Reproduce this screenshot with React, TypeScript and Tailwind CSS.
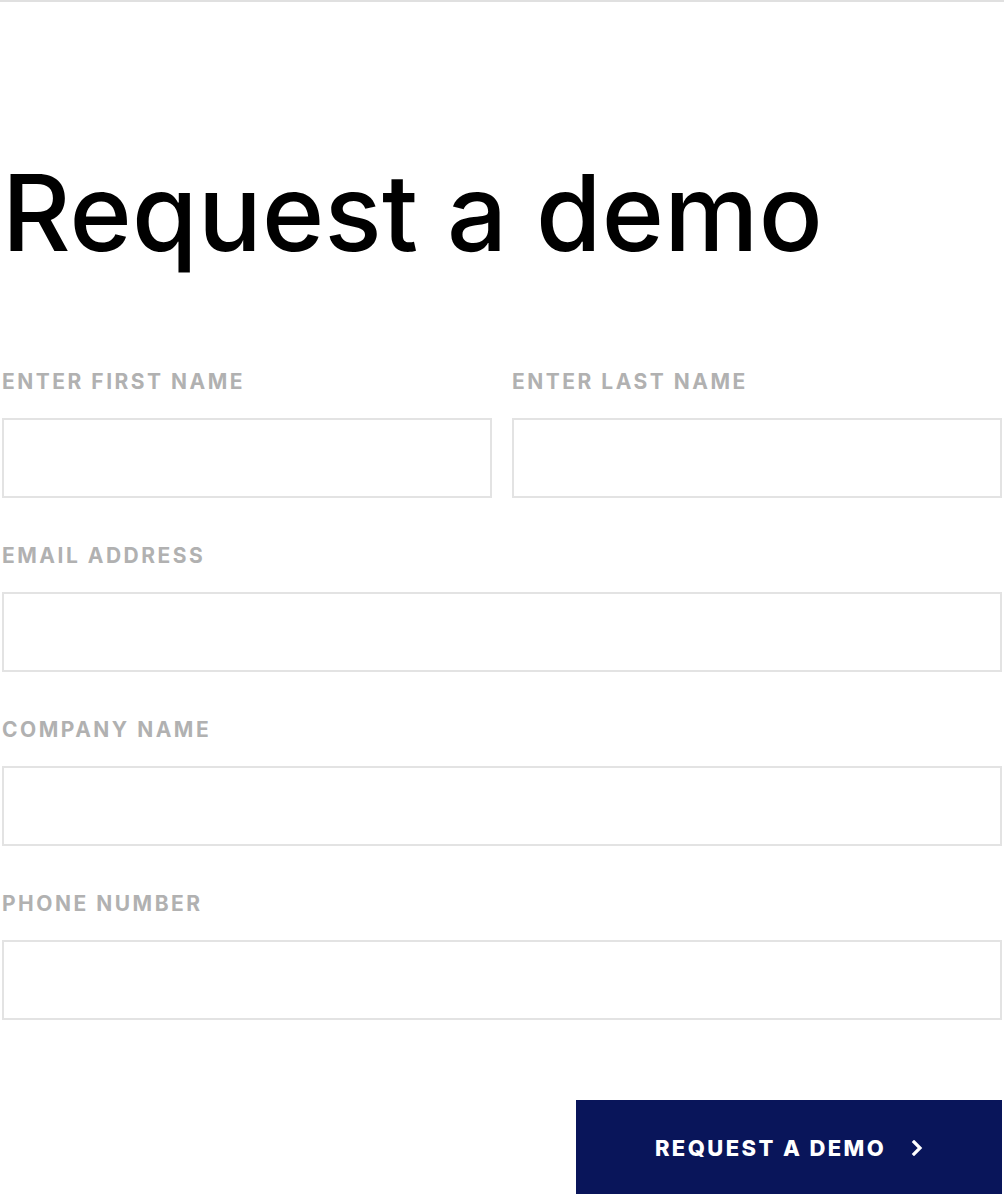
import React from "react";

const font = { fontFamily: "Inter, 'Noto Sans', sans-serif" };

function Label({ children }: { children: React.ReactNode }) {
  return (
    <div className="h-6 leading-6 text-[21px] font-bold uppercase tracking-[2.5px] text-[#b1b1b1] mb-6 whitespace-nowrap">
      {children}
    </div>
  );
}

function Input() {
  return <input className="block w-full h-[80px] border-2 border-[#e3e3e3] bg-white outline-none" />;
}

export default function App() {
  return (
    <div className="w-[1004px] h-[1194px] overflow-hidden bg-white" style={font}>
      <div className="h-[2px] bg-[#e0e0e0]" />
      <div className="px-[2px]">
        <h1 className="mt-[158px] text-[106px] leading-none font-medium text-black tracking-[0.3px] whitespace-nowrap">
          Request a demo
        </h1>
        <form className="mt-[104px]" onSubmit={(e) => e.preventDefault()}>
          <div className="grid grid-cols-2 gap-x-5">
            <div>
              <Label>Enter first name</Label>
              <Input />
            </div>
            <div>
              <Label>Enter last name</Label>
              <Input />
            </div>
          </div>
          <div className="mt-[46px]">
            <Label>Email address</Label>
            <Input />
          </div>
          <div className="mt-[46px]">
            <Label>Company name</Label>
            <Input />
          </div>
          <div className="mt-[46px]">
            <Label>Phone number</Label>
            <Input />
          </div>
          <div className="mt-[80px] flex justify-end">
            <button
              type="submit"
              className="w-[426px] h-[95px] bg-[#09155a] text-white flex items-center justify-center gap-[25px]"
            >
              <span className="text-[22px] font-extrabold uppercase tracking-[2.4px] leading-none">Request a demo</span>
              <svg width="12" height="16" viewBox="0 0 12 16" className="shrink-0">
                <polyline points="3,2 9,8 3,14" fill="none" stroke="white" strokeWidth="3.2" strokeLinecap="square" />
              </svg>
            </button>
          </div>
        </form>
      </div>
    </div>
  );
}
